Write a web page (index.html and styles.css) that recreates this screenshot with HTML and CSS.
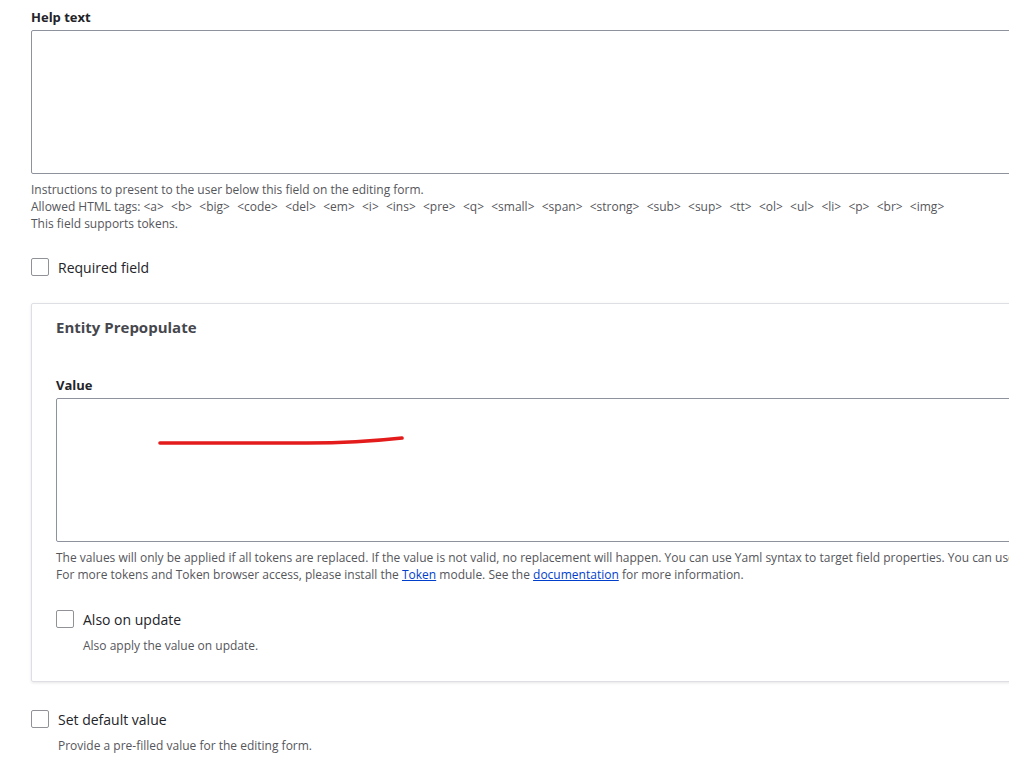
FILE: index.html
```html
<!DOCTYPE html>
<html>
<head>
<meta charset="utf-8">
<link rel="stylesheet" href="styles.css">
</head>
<body>
<div class="page">
  <div class="field">
    <label class="label">Help text</label>
    <div class="textarea"></div>
    <div class="desc">
      <div>Instructions to present to the user below this field on the editing form.</div>
      <div><span>Allowed HTML tags:</span> <span class="tags">&lt;a&gt; &lt;b&gt; &lt;big&gt; &lt;code&gt; &lt;del&gt; &lt;em&gt; &lt;i&gt; &lt;ins&gt; &lt;pre&gt; &lt;q&gt; &lt;small&gt; &lt;span&gt; &lt;strong&gt; &lt;sub&gt; &lt;sup&gt; &lt;tt&gt; &lt;ol&gt; &lt;ul&gt; &lt;li&gt; &lt;p&gt; &lt;br&gt; &lt;img&gt;</span></div>
      <div>This field supports tokens.</div>
    </div>
  </div>

  <div class="check check-required">
    <span class="box"></span><span class="check-label">Required field</span>
  </div>

  <div class="fieldset">
    <div class="legend">Entity Prepopulate</div>
    <div class="field inner-field">
      <label class="label">Value</label>
      <div class="textarea value-area">
        <svg class="scribble" width="260" height="20" viewBox="0 0 260 20"><path d="M3 14 L150 14 C190 14 218 12 245 9" fill="none" stroke="#e31b1b" stroke-width="3.6" stroke-linecap="round"/></svg>
      </div>
      <div class="desc">
        <div>The values will only be applied if all tokens are replaced. If the value is not valid, no replacement will happen. You can use Yaml syntax to target field properties. You can use tokens too.</div>
        <div>For more tokens and Token browser access, please install the <a href="#">Token</a> module. See the <a href="#">documentation</a> for more information.</div>
      </div>
    </div>
    <div class="check check-update">
      <span class="box"></span><span class="check-label">Also on update</span>
    </div>
    <div class="check-desc">Also apply the value on update.</div>
  </div>

  <div class="check check-default">
    <span class="box"></span><span class="check-label">Set default value</span>
  </div>
  <div class="check-desc">Provide a pre-filled value for the editing form.</div>
</div>
</body>
</html>
```

FILE: styles.css
```css
html, body {
  margin: 0;
  padding: 0;
  overflow: hidden;
  background: #fff;
}
body {
  font-family: "Open Sans", "Noto Sans", sans-serif;
  color: #222330;
  width: 1009px;
  height: 763px;
}
.page {
  padding: 8px 0 0 31px;
  width: 1300px;
}
.label {
  display: block;
  font-weight: 700;
  font-size: 13px;
  line-height: 18px;
  color: #232429;
  margin-bottom: 4px;
}
.textarea {
  height: 142px;
  border: 1px solid #8e929c;
  border-radius: 2px;
  background: #fff;
  position: relative;
}
.desc {
  margin-top: 7px;
  font-size: 12px;
  line-height: 17px;
  color: #55565b;
  white-space: nowrap;
}
.tags {
  word-spacing: 4.1px;
}
.desc a {
  color: #003ecc;
  text-decoration: underline;
}
.check {
  display: flex;
  align-items: center;
  height: 18px;
}
.check-required {
  margin-top: 26px;
}
.box {
  width: 16px;
  height: 16px;
  border: 1px solid #919297;
  border-radius: 2px;
  background: #fff;
  flex: none;
}
.check-label {
  margin-left: 9px;
  font-size: 14px;
  color: #232429;
}
.fieldset {
  margin-top: 27px;
  border: 1px solid #dedfe4;
  border-radius: 2px;
  box-shadow: 0 1px 3px rgba(0, 0, 0, 0.1);
  padding: 13px 0 27px 24px;
}
.legend {
  font-weight: 700;
  font-size: 15px;
  line-height: 20px;
  color: #46474d;
}
.inner-field {
  margin-top: 39px;
}
.check-update {
  margin-top: 27px;
}
.check-desc {
  margin-top: 9px;
  margin-left: 27px;
  font-size: 12px;
  line-height: 17px;
  color: #55565b;
}
.check-default {
  margin-top: 28px;
}
.scribble {
  position: absolute;
  left: 100px;
  top: 30px;
}
```
